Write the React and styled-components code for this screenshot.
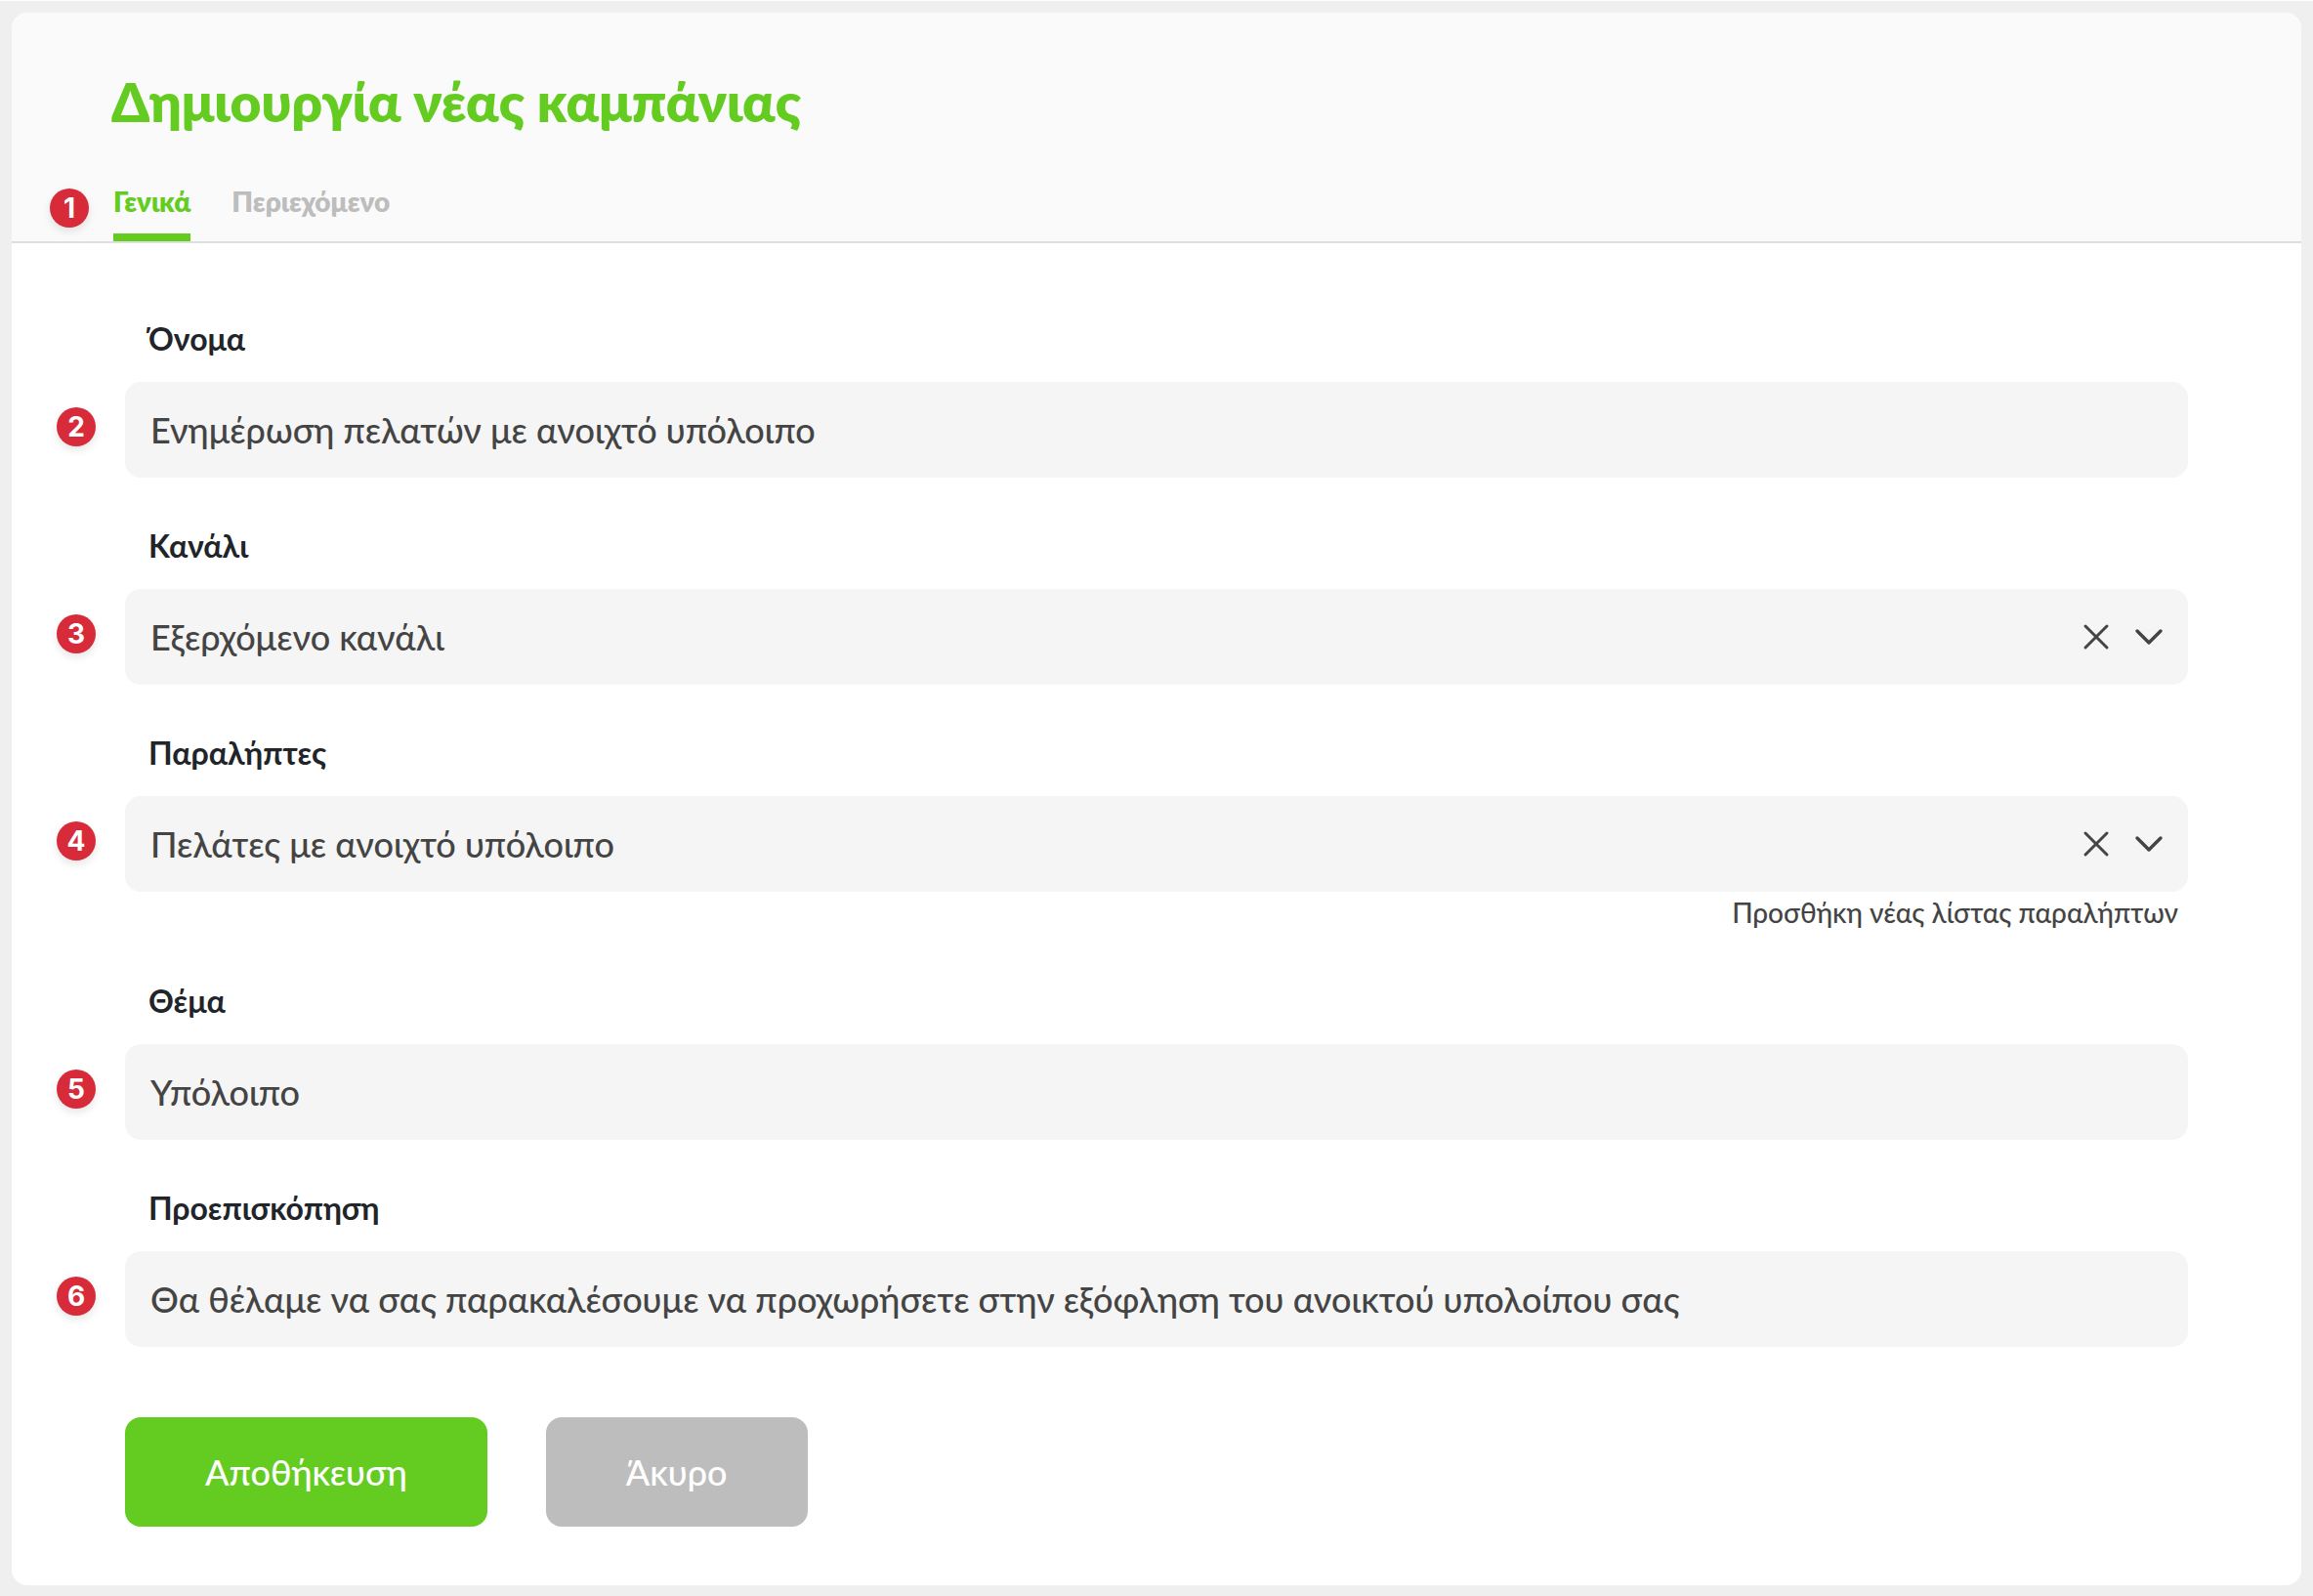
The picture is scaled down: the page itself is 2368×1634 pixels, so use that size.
import React, { useState } from "react";
import styled, { createGlobalStyle, css } from "styled-components";

const GlobalStyle = createGlobalStyle`
  *, *::before, *::after { box-sizing: border-box; }
  body {
    margin: 0;
    background: #efefef;
    color: #444;
    font-family: Lato, "Open Sans", sans-serif;
  }
  button, input, select { font: inherit; color: inherit; }
`;

const Page = styled.div`
  min-height: 100vh;
  display: flex;
  padding: 12px 12px 11px;
  border-top: 1px solid #fff;
`;

const Card = styled.main`
  flex: 1;
  min-width: 0;
  background: #fff;
  border-radius: 16px;
  overflow: hidden;
`;

const Header = styled.header`
  display: flex;
  flex-direction: column;
  gap: 51px;
  padding: 57px 104px 0 102px;
  background: #fafafa;
  border-bottom: 2px solid #dedede;
`;

const Title = styled.h1`
  margin: 0;
  color: #64cc21;
  font-size: 55px;
  line-height: 68px;
  font-weight: 800;
`;

const Tabs = styled.nav`
  position: relative;
  display: flex;
  gap: 42px;
  padding-left: 2px;
`;

const Tab = styled.button`
  padding: 0 0 16px;
  border: 0;
  border-bottom: 8px solid ${(p) => (p.$active ? "#64cc21" : "transparent")};
  background: none;
  color: ${(p) => (p.$active ? "#64cc21" : "#bdbdbd")};
  font-size: 28px;
  line-height: 34px;
  font-weight: 800;
  cursor: pointer;
`;

const Form = styled.form`
  display: flex;
  flex-direction: column;
  gap: 72px;
  padding: 78px 116px 60px;
`;

const Fields = styled.div`
  display: flex;
  flex-direction: column;
  gap: 50px;
`;

const FieldGroup = styled.div`
  display: flex;
  flex-direction: column;
`;

const Label = styled.label`
  margin-bottom: 24px;
  padding-left: 24px;
  color: #212529;
  font-size: 32px;
  line-height: 40px;
  font-weight: 700;
`;

const Control = styled.div`
  position: relative;
  display: flex;
  align-items: center;
  height: 98px;
  border-radius: 16px;
  background: #f5f5f5;
`;

const controlText = css`
  flex: 1;
  min-width: 0;
  height: 100%;
  padding: 0 26px;
  border: 0;
  border-radius: 16px;
  outline: 0;
  background: transparent;
  font-size: 36px;
  font-weight: 500;
`;

const TextInput = styled.input`
  ${controlText}
`;

const Select = styled.select`
  ${controlText}
  appearance: none;
`;

const ClearButton = styled.button`
  display: flex;
  padding: 0;
  border: 0;
  background: none;
  cursor: pointer;
`;

const SelectIcons = styled.div`
  display: flex;
  align-items: center;
  gap: 22px;
  padding-right: 24px;
`;

const Icon = styled.svg`
  display: block;
  width: 32px;
  height: 32px;
  fill: none;
  stroke: #444;
  stroke-linecap: round;
  stroke-linejoin: round;
`;

const Hint = styled.a`
  align-self: flex-end;
  padding-right: 10px;
  color: #444;
  font-size: 28px;
  line-height: 42px;
  font-weight: 500;
  text-decoration: none;
`;

const Badge = styled.span`
  position: absolute;
  left: ${(p) => (p.$tab ? "-63px" : "-70px")};
  top: ${(p) => (p.$tab ? "4px" : "26px")};
  width: 40px;
  height: 40px;
  border-radius: 50%;
  background: #d82b3a;
  box-shadow: 0 4px 8px rgba(0, 0, 0, 0.1);
  color: #fff;
  font-family: Inter, sans-serif;
  font-size: 28px;
  line-height: 40px;
  font-weight: 700;
  text-align: center;
`;

const Actions = styled.div`
  display: flex;
  gap: 60px;
`;

const ActionButton = styled.button`
  height: 112px;
  padding: 0 82px;
  border: 0;
  border-radius: 16px;
  background: ${(p) => (p.$primary ? "#64cc21" : "#bdbdbd")};
  color: #fff;
  font-size: 36px;
  font-weight: 500;
  cursor: pointer;
`;

const fields = [
  { id: "name", label: "Όνομα", value: "Ενημέρωση πελατών με ανοιχτό υπόλοιπο" },
  { id: "channel", label: "Κανάλι", value: "Εξερχόμενο κανάλι", select: true },
  {
    id: "recipients",
    label: "Παραλήπτες",
    value: "Πελάτες με ανοιχτό υπόλοιπο",
    select: true,
    hint: "Προσθήκη νέας λίστας παραλήπτων",
  },
  { id: "subject", label: "Θέμα", value: "Υπόλοιπο" },
  {
    id: "preview",
    label: "Προεπισκόπηση",
    value:
      "Θα θέλαμε να σας παρακαλέσουμε να προχωρήσετε στην εξόφληση του ανοικτού υπολοίπου σας",
  },
];

function SelectControl({ field }) {
  const [value, setValue] = useState(field.value);
  return (
    <>
      <Select id={field.id} value={value} onChange={(e) => setValue(e.target.value)}>
        <option value="" />
        <option value={field.value}>{field.value}</option>
      </Select>
      <SelectIcons>
        <ClearButton type="button" aria-label="Καθαρισμός" onClick={() => setValue("")}>
          <Icon viewBox="0 0 32 32" strokeWidth="3" aria-hidden="true">
            <path d="M5 5 27 27M27 5 5 27" />
          </Icon>
        </ClearButton>
        <Icon viewBox="0 0 32 32" strokeWidth="3.4" aria-hidden="true">
          <path d="M4 10 16 22 28 10" />
        </Icon>
      </SelectIcons>
    </>
  );
}

function Field({ field, number }) {
  return (
    <FieldGroup>
      <Label htmlFor={field.id}>{field.label}</Label>
      <Control>
        <Badge>{number}</Badge>
        {field.select ? (
          <SelectControl field={field} />
        ) : (
          <TextInput id={field.id} type="text" defaultValue={field.value} />
        )}
      </Control>
      {field.hint && <Hint href="#recipients">{field.hint}</Hint>}
    </FieldGroup>
  );
}

export default function App() {
  const [tab, setTab] = useState(0);
  return (
    <Page>
      <GlobalStyle />
      <Card>
        <Header>
          <Title>Δημιουργία νέας καμπάνιας</Title>
          <Tabs>
            <Badge $tab>1</Badge>
            {["Γενικά", "Περιεχόμενο"].map((name, i) => (
              <Tab key={name} type="button" $active={tab === i} onClick={() => setTab(i)}>
                {name}
              </Tab>
            ))}
          </Tabs>
        </Header>
        <Form onSubmit={(e) => e.preventDefault()}>
          <Fields>
            {fields.map((field, i) => (
              <Field key={field.id} field={field} number={i + 2} />
            ))}
          </Fields>
          <Actions>
            <ActionButton type="submit" $primary>
              Αποθήκευση
            </ActionButton>
            <ActionButton type="button">Άκυρο</ActionButton>
          </Actions>
        </Form>
      </Card>
    </Page>
  );
}
